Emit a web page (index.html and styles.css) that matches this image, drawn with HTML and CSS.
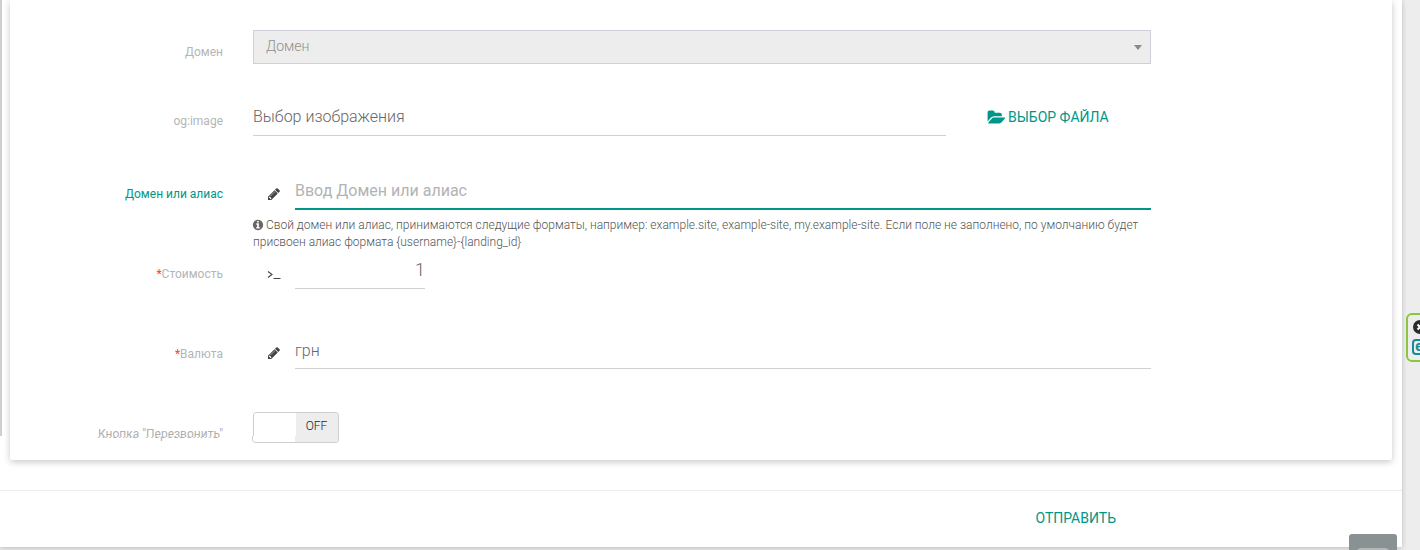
FILE: index.html
```html
<!DOCTYPE html>
<html lang="ru">
<head>
<meta charset="utf-8">
<title>Форма</title>
<link rel="stylesheet" href="styles.css">
</head>
<body>
<div class="page">
  <div class="modal">
    <span class="left-edge"></span>
    <form class="card">
      <div class="row row-select">
        <label class="label">Домен</label>
        <div class="field">
          <div class="select">Домен<span class="caret"></span></div>
        </div>
      </div>
      <div class="row row-file">
        <label class="label">og:image</label>
        <div class="field file-field">
          <div class="input file-input"><span class="value">Выбор изображения</span></div>
          <a class="file-btn">
            <svg class="folder" viewBox="0 0 2048 1792"><path d="M1943 952q0 31-31 66l-336 396q-43 51-120.5 86.5t-143.5 35.5h-1088q-34 0-60.5-13t-26.5-43q0-31 31-66l336-396q43-51 120.5-86.5t143.5-35.5h1088q34 0 60.5 13t26.5 43zm-343-344v160h-832q-94 0-197 47.5t-164 119.5l-337 396-5 6q0-4-.5-12.5t-.5-12.5v-960q0-92 66-158t158-66h320q92 0 158 66t66 158v32h544q92 0 158 66t66 158z"/></svg>
            ВЫБОР ФАЙЛА
          </a>
        </div>
      </div>
      <div class="row row-alias">
        <label class="label label-active">Домен или алиас</label>
        <div class="field icon-field">
          <svg class="pencil" viewBox="0 0 1792 1792"><path d="M491 1536l91-91-235-235-91 91v107h128v128h107zm523-928q0-22-22-22-10 0-17 7l-542 542q-7 7-7 17 0 22 22 22 10 0 17-7l542-542q7-7 7-17zm-54-192l416 416-832 832h-416v-416zm683 96q0 53-37 90l-166 166-416-416 166-165q36-38 90-38 53 0 91 38l235 234q37 39 37 91z"/></svg>
          <div class="input input-active"><span class="placeholder">Ввод Домен или алиас</span></div>
        </div>
      </div>
      <div class="row row-help">
        <span class="label"></span>
        <p class="help"><svg class="info" viewBox="0 0 1792 1792"><path d="M1152 1376v-160q0-14-9-23t-23-9h-96v-512q0-14-9-23t-23-9h-320q-14 0-23 9t-9 23v160q0 14 9 23t23 9h96v320h-96q-14 0-23 9t-9 23v160q0 14 9 23t23 9h448q14 0 23-9t9-23zm-128-896v-160q0-14-9-23t-23-9h-192q-14 0-23 9t-9 23v160q0 14 9 23t23 9h192q14 0 23-9t9-23zm640 416q0 209-103 385.5t-279.5 279.5-385.5 103-385.5-103-279.5-279.5-103-385.5 103-385.5 279.5-279.5 385.5-103 385.5 103 279.5 279.5 103 385.5z"/></svg> Свой домен или алиас, принимаются следущие форматы, например: example.site, example-site, my.example-site. Если поле не заполнено, по умолчанию будет присвоен алиас формата {username}-{landing_id}</p>
      </div>
      <div class="row row-cost">
        <label class="label"><span class="req">*</span>Стоимость</label>
        <div class="field icon-field">
          <svg class="terminal" viewBox="0 0 14 10"><path d="M1 1.5 5 4.500 1 7.500M6.500 8.500H13.500" /></svg>
          <div class="input input-number"><span class="value">1</span></div>
        </div>
      </div>
      <div class="row row-currency">
        <label class="label"><span class="req">*</span>Валюта</label>
        <div class="field icon-field">
          <svg class="pencil" viewBox="0 0 1792 1792"><path d="M491 1536l91-91-235-235-91 91v107h128v128h107zm523-928q0-22-22-22-10 0-17 7l-542 542q-7 7-7 17 0 22 22 22 10 0 17-7l542-542q7-7 7-17zm-54-192l416 416-832 832h-416v-416zm683 96q0 53-37 90l-166 166-416-416 166-165q36-38 90-38 53 0 91 38l235 234q37 39 37 91z"/></svg>
          <div class="input"><span class="value">грн</span></div>
        </div>
      </div>
      <div class="row row-toggle">
        <label class="label label-torn" data-text="Кнопка &quot;Перезвонить&quot;">Кнопка "Перезвонить"</label>
        <div class="field">
          <div class="toggle">
            <div class="toggle-top"><span class="toggle-on"></span><span class="toggle-off">OFF</span></div>
            <div class="toggle-tail"><span class="toggle-on"></span><span class="toggle-off"></span></div>
          </div>
        </div>
      </div>
    </form>
    <div class="footer">
      <a class="submit">ОТПРАВИТЬ</a>
    </div>
  </div>
  <aside class="widget">
    <span class="widget-close"><svg viewBox="0 0 14 14"><circle cx="7" cy="7" r="7"/><path d="M4.500 4.500 9.500 9.500M9.500 4.500 4.500 9.500"/></svg></span>
    <span class="widget-e">e</span>
  </aside>
  <div class="corner-btn"></div>
</div>
</body>
</html>
```
FILE: styles.css
```css
* { box-sizing: border-box; }
html, body { margin: 0; padding: 0; }
body {
  width: 1420px;
  height: 550px;
  overflow: hidden;
  background: #ededed;
  font-family: Roboto, "Noto Sans", sans-serif;
}
.page {
  position: relative;
  width: 1420px;
  height: 550px;
  overflow: hidden;
}
.modal {
  position: relative;
  width: 1402px;
  height: 547px;
  background: #fff;
  box-shadow: 0 1px 5px rgba(0, 0, 0, .22);
  padding-left: 10px;
}
.left-edge {
  position: absolute;
  left: 0;
  top: 0;
  width: 2px;
  height: 436px;
  background: #cfcfcf;
}
.card {
  width: 1382px;
  height: 460px;
  margin-bottom: 30px;
  padding-top: 30px;
  overflow: hidden;
  background: #fff;
  border-radius: 0 0 2px 2px;
  box-shadow: 0 2px 7px rgba(0, 0, 0, .22);
}
.row {
  display: flex;
  column-gap: 30px;
}
.label {
  flex: 0 0 213px;
  padding-top: 15px;
  font-size: 12px;
  line-height: 15px;
  text-align: right;
  color: #b5b5b5;
}
.row-file .label,
.row-cost .label,
.row-currency .label { padding-top: 16px; }
.label-active { color: #009688; }
.req { color: #f44336; }
.field { flex: 0 0 898px; }

.row-select { height: 34px; }
.row-file { height: 38px; margin-top: 34px; }
.row-alias { height: 38px; margin-top: 36px; }
.row-help { height: 34px; margin-top: 7px; }
.row-cost { height: 38px; }
.row-currency { height: 38px; margin-top: 42px; }
.row-toggle { height: 31px; margin-top: 43px; }

.select {
  position: relative;
  height: 34px;
  padding-left: 12px;
  background: #ededed;
  border: 1px solid #d0d0dc;
  font-size: 14px;
  font-weight: 300;
  line-height: 30px;
  color: #8f8f8f;
}
.caret {
  position: absolute;
  right: 8px;
  top: 14px;
  border-left: 4px solid transparent;
  border-right: 4px solid transparent;
  border-top: 5px solid #8a8a8a;
}
.input {
  flex: 1;
  height: 38px;
  border-bottom: 1px solid #d0d0d0;
  font-size: 16px;
  font-weight: 300;
  line-height: 38px;
  color: #666;
}
.row-currency .input { line-height: 40px; }
.input-active { border-bottom: 2px solid #009688; }
.placeholder { color: #b3b3b3; font-weight: 400; }
.input-number { flex: 0 0 130px; text-align: right; font-size: 18px; }
.icon-field { display: flex; }
.pencil {
  flex: 0 0 14px;
  width: 14px;
  height: 14px;
  margin: 15px 14px 0 14px;
  fill: #444;
}
.terminal {
  flex: 0 0 14px;
  width: 14px;
  height: 10px;
  margin: 19px 14px 0 14px;
  fill: none;
  stroke: #444;
  stroke-width: 1.100;
}
.file-field { display: flex; }
.file-input { flex: 0 0 693px; }
.file-btn {
  display: flex;
  align-items: center;
  height: 38px;
  margin-left: 40.5px;
  font-size: 14px;
  color: #009688;
  white-space: nowrap;
}
.folder {
  width: 19px;
  height: 17px;
  margin-right: 2.5px;
  fill: #009688;
}
.help {
  flex: 0 0 898px;
  margin: 0;
  font-size: 12px;
  font-weight: 300;
  line-height: 17px;
  color: #555;
}
.info {
  width: 12px;
  height: 12px;
  margin: 0 -1px;
  vertical-align: -2px;
  fill: #666;
}
.label-torn { position: relative; color: #b0b0b0; }
.label-torn::after {
  content: attr(data-text);
  position: absolute;
  right: 1px;
  top: 15px;
  background: #fff;
  clip-path: inset(10px 0 0 0);
  white-space: nowrap;
}
.toggle { width: 86px; }
.toggle-top {
  display: flex;
  height: 24px;
  border: 1px solid #cfcfcf;
  border-bottom: 0;
  border-radius: 4px 4px 0 0;
  overflow: hidden;
}
.toggle-tail {
  display: flex;
  height: 7px;
  margin-left: -1px;
  border: 1px solid #cfcfcf;
  border-top: 0;
  border-radius: 0 0 4px 4px;
  overflow: hidden;
}
.toggle-on { flex: 0 0 42px; background: #fff; }
.toggle-off {
  flex: 1;
  padding-right: 1px;
  background: #ededed;
  font-size: 12px;
  font-weight: 300;
  line-height: 27px;
  text-align: center;
  color: #222;
}
.footer {
  display: flex;
  justify-content: flex-end;
  align-items: center;
  height: 57px;
  margin-left: -10px;
  padding: 0 286px 2px 0;
  border-top: 1px solid #eee;
}
.submit {
  font-size: 14px;
  color: #009688;
}
.widget {
  position: absolute;
  left: 1406px;
  top: 313px;
  width: 40px;
  height: 49px;
  padding: 5px 0 0 5px;
  display: flex;
  flex-direction: column;
  gap: 5px;
  background: #ededed;
  border: 2px solid #8cc63f;
  border-radius: 6px;
}
.widget-close svg {
  display: block;
  width: 14px;
  height: 14px;
  fill: #2a2a2a;
  stroke: #fff;
  stroke-width: 2;
}
.widget-close svg circle { stroke: none; }
.widget-e {
  width: 16px;
  height: 16px;
  margin-left: -1px;
  padding-right: 2px;
  border: 2px solid #0f8c96;
  border-radius: 4px;
  font-size: 14px;
  font-weight: 700;
  line-height: 11px;
  text-align: center;
  color: #0f8c96;
}
.corner-btn {
  position: absolute;
  left: 1349px;
  top: 534px;
  width: 48px;
  height: 20px;
  background: #8a9192;
  border-radius: 3px 3px 0 0;
}
.corner-btn::after {
  content: "";
  position: absolute;
  left: 8px;
  right: 8px;
  top: 14px;
  height: 6px;
  background: #b4b8b8;
  border-radius: 4px 4px 0 0;
}
```
